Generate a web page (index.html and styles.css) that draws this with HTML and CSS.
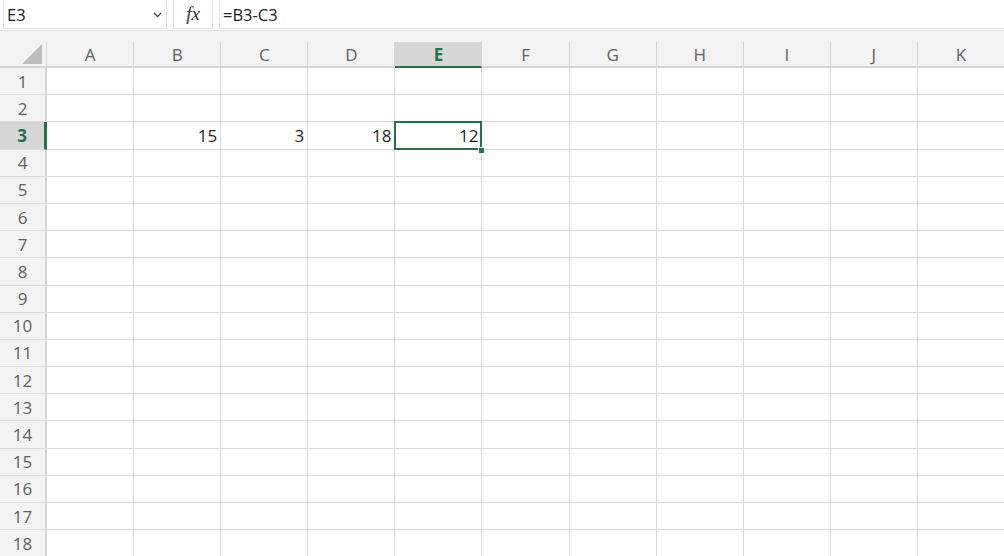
FILE: index.html
```html
<!DOCTYPE html>
<html>

<head>
  <meta charset="utf-8" />
  <title>Book1 - Excel</title>
  <link rel="stylesheet" href="styles.css">
</head>

<body>
  <div class="formula-bar">
    <div class="name-box">
      <span>E3</span>
      <svg class="chevron" width="9" height="6" viewBox="0 0 9 6">
        <polyline points="1,1 4.5,4.5 8,1" fill="none" stroke="#444" stroke-width="1.3" />
      </svg>
    </div>
    <div class="fx-box"><span class="fx">fx</span></div>
    <div class="formula-input">=B3-C3</div>
  </div>

  <div class="sheet" id="sheet">
    <div class="corner">
      <div class="label"><span class="triangle"></span></div>
    </div>
  </div>

  <script>
    // columns, rows and the few values in the sheet
    const cols = ["A", "B", "C", "D", "E", "F", "G", "H", "I", "J", "K"];
    const values = { 3: { B: 15, C: 3, D: 18, E: 12 } };
    const activeCol = "E";
    const activeRow = 3;
    const sheet = document.getElementById("sheet");

    cols.forEach(function (c) {
      const head = document.createElement("div");
      head.className = "col-head";
      const label = document.createElement("div");
      label.className = c === activeCol ? "label selected" : "label";
      label.textContent = c;
      head.appendChild(label);
      sheet.appendChild(head);
    });

    for (let r = 1; r <= 18; r++) {
      const rh = document.createElement("div");
      rh.className = r === activeRow ? "row-head selected" : "row-head";
      rh.textContent = r;
      sheet.appendChild(rh);
      cols.forEach(function (c) {
        const cell = document.createElement("div");
        cell.className = "cell";
        if (values[r] && values[r][c] !== undefined) {
          cell.textContent = values[r][c];
        }
        if (r === activeRow && c === activeCol) {
          cell.className = "cell active";
          const sel = document.createElement("div");
          sel.className = "selection";
          const handle = document.createElement("div");
          handle.className = "fill-handle";
          cell.appendChild(sel);
          cell.appendChild(handle);
        }
        sheet.appendChild(cell);
      });
    }
  </script>
</body>

</html>
```

FILE: styles.css
```css
body {
  margin: 0;
  font-family: "Open Sans", "Noto Sans", sans-serif;
  background: #fff;
  overflow: hidden;
}

/* formula bar */
.formula-bar {
  display: flex;
  height: 30px;
  border-bottom: 1px solid #e2e2e2;
  background: #fff;
}

.name-box,
.fx-box,
.formula-input {
  height: 29px;
  box-sizing: border-box;
  border: 1px solid #e3e3e3;
  border-top: none;
  display: flex;
  align-items: center;
  font-size: 16.5px;
  color: #222;
}

.name-box {
  margin-left: 3px;
  width: 164px;
  padding: 0 4px 0 3px;
  justify-content: space-between;
}

.chevron {
  margin-top: 1px;
}

.fx-box {
  margin-left: 6px;
  width: 40px;
  justify-content: center;
}

.fx {
  font-family: "Liberation Serif", "DejaVu Serif", serif;
  font-style: italic;
  font-size: 19px;
  color: #333;
}

.formula-input {
  margin-left: 6px;
  flex: 1;
  padding-left: 3px;
  border-right: none;
}

/* sheet grid */
.sheet {
  display: grid;
  grid-template-columns: 47px repeat(11, 87.1px);
  grid-template-rows: 37px repeat(18, 27.2px);
}

.corner,
.col-head {
  padding-top: 11px;
  background: #f3f3f3;
}

.label {
  height: 26px;
  box-sizing: border-box;
  border-right: 1px solid #d6d6d6;
  border-bottom: 2px solid #d6d6d6;
  display: flex;
  align-items: center;
  justify-content: center;
  font-size: 17px;
  color: #616161;
}

.corner .label {
  justify-content: flex-end;
  align-items: flex-end;
  padding: 0 4px 2px 0;
}

.triangle {
  width: 0;
  height: 0;
  border-left: 20px solid transparent;
  border-bottom: 20px solid #bcbcbc;
}

.label.selected {
  background: #d6d6d6;
  border-bottom-color: #217346;
  color: #217346;
  font-weight: bold;
}

.row-head {
  background: #f3f3f3;
  box-sizing: border-box;
  border-right: 2px solid #d6d6d6;
  border-bottom: 1px solid #dadada;
  display: flex;
  align-items: center;
  justify-content: center;
  font-size: 17px;
  color: #616161;
}

.row-head.selected {
  background: #d6d6d6;
  border-right: 3px solid #217346;
  color: #217346;
  font-weight: bold;
}

.cell {
  box-sizing: border-box;
  border-right: 1px solid #dadada;
  border-bottom: 1px solid #dadada;
  display: flex;
  align-items: center;
  justify-content: flex-end;
  padding: 1px 3px 0 0;
  font-size: 17px;
  color: #1f1f1f;
}

.cell.active {
  position: relative;
}

.selection {
  position: absolute;
  left: -1px;
  top: -1px;
  right: -1px;
  bottom: -1px;
  border: 2px solid #217346;
}

.fill-handle {
  position: absolute;
  right: -4px;
  bottom: -5px;
  width: 5px;
  height: 5px;
  background: #217346;
  border: 1px solid #fff;
}
```
